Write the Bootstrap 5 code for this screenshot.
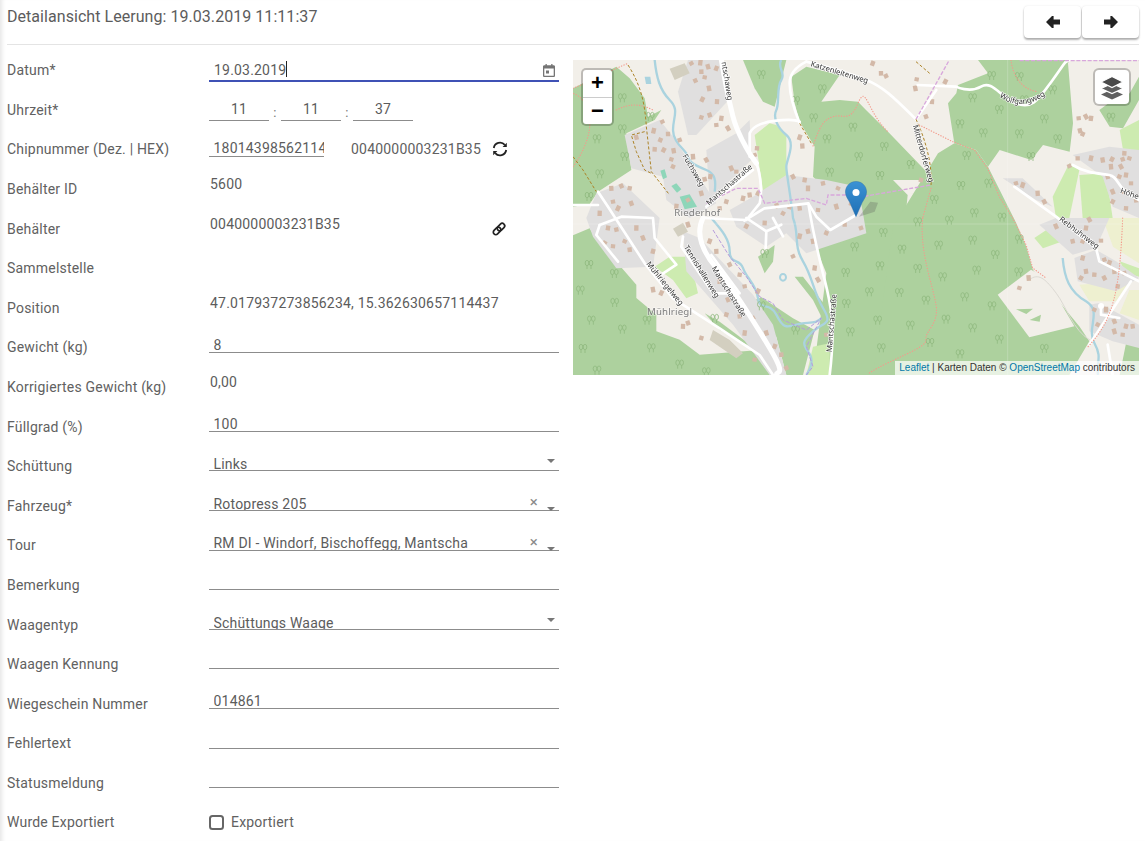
<!DOCTYPE html>
<html lang="de">
<head>
  <meta charset="UTF-8" />
  <meta name="viewport" content="width=device-width, initial-scale=1.0"/>
  <title>Detailansicht Leerung</title>
  <link href="https://cdn.jsdelivr.net/npm/bootstrap@5.3.0/dist/css/bootstrap.min.css" rel="stylesheet">
  <style>
    html, body { height: 100%; overflow: hidden; }
    body {
      font-family: Roboto, "Liberation Sans", sans-serif;
      font-size: 14px;
      letter-spacing: .2px;
      color: #616161;
      background: #fff;
      box-shadow: inset 5px 0 4px -3px rgba(0,0,0,.1);
    }
    .page-wrap { margin: 0 6px 0 7px; }

    .head-bar { height: 45px; border-bottom: 1px solid #e4e4e4; }
    .head-title { font-size: 16px; letter-spacing: .05px; line-height: 20px; padding-top: 7px; color: #5c5c5c; }
    .nav-btn {
      width: 57px; height: 32px; margin-top: 6px; padding: 0;
      background: #fff; border: 0; border-radius: 4px;
      box-shadow: 0 2px 2px rgba(0,0,0,.3), 0 0 2px rgba(0,0,0,.1);
      display: flex; align-items: center; justify-content: center;
    }
    .nav-btn + .nav-btn { margin-left: 1px; }

    .form-col { padding: 5.2px 14px 0 0; }
    .map-col { padding-top: 15px; }

    .field-row { display: flex; height: 39.6px; }
    .field-label { width: 202px; flex: none; line-height: 40px; white-space: nowrap; }
    .field-body { flex: 1 1 auto; min-width: 0; height: 25.3px; display: flex; flex-direction: column; justify-content: flex-end; position: relative; }
    .field-text { line-height: 20px; padding: 9px 0 0 1px; height: 29px; color: #5c5c5c; }

    .line-input {
      display: block; width: 100%; height: 18px;
      padding: 4px 4px 0 4.500px;
      border: 0; border-bottom: 1px solid #8c8c8c; border-radius: 0;
      background: transparent; box-shadow: none;
      font: 14px Roboto, sans-serif; letter-spacing: .2px; color: #5c5c5c; line-height: 14px;
      outline: 0;
    }
    .line-input:focus { border-color: #8c8c8c; box-shadow: none; }
    select.line-input { appearance: none; -webkit-appearance: none; }

    .date-body { height: 32px; }
    .date-input { height: 22px; padding: 0 4px 0 5px; line-height: 20px; border-bottom: 2px solid #3f51b5; }
    .date-input:focus { border-color: #3f51b5; }
    .caret-line { position: absolute; left: 77px; top: 11px; width: 1px; height: 16px; background: #222; }
    .date-icon { position: absolute; right: 4px; top: 14px; }

    .time-body { height: 31.300px; flex-direction: row; align-items: flex-end; justify-content: flex-start; }
    .time-input { width: 60px; height: 22px; padding: 0 0 1px; line-height: 20px; text-align: center; flex: none; }
    .time-sep { width: 12px; text-align: center; line-height: 16px; font-size: 13px; color: #757575; flex: none; }

    .chip-body { height: 27.800px; flex-direction: row; align-items: flex-end; justify-content: flex-start; }
    .chip-input { width: 115px; flex: none; padding: 0 0 1px 4.500px; height: 17px; }
    .chip-hex { margin-left: 27px; line-height: 20px; position: relative; top: 2px; white-space: nowrap; }
    .chip-icon { margin-left: 11px; position: relative; top: 0; }

    .link-icon { position: absolute; left: 282px; top: 12px; }

    .sel-caret::after {
      content: ""; position: absolute; right: 4px; bottom: 8px;
      border-left: 4.500px solid transparent; border-right: 4.500px solid transparent; border-top: 4px solid #777;
    }
    .caret-low::after { bottom: 0; }
    .clear-x { position: absolute; right: 21px; bottom: 1px; font-size: 15px; line-height: 15px; color: #8a8a8a; }

    .check-box { width: 15px; height: 15px; margin: 1px 0 0; border: 2px solid #666; border-radius: 2px; background: #fff; flex: none; }
    .check-wrap { display: flex; align-items: center; gap: 7px; height: 100%; }

    .map-box { position: relative; height: 315px; overflow: hidden; background: #f2efe9; }
    .map-svg { display: block; width: 566px; height: 315px; filter: blur(.5px); }
    .map-svg text { font-family: "Noto Sans", sans-serif; font-size: 23px; letter-spacing: 0; fill: #333; paint-order: stroke; stroke: rgba(255,255,255,.85); stroke-width: 4px; }
    .map-svg text.place { font-size: 29px; fill: #7b7b7b; stroke: rgba(255,255,255,.5); letter-spacing: .5px; }

    .zoom-box {
      position: absolute; left: 10px; top: 10px; width: 29px; height: 54px;
      background: #fff; border-radius: 3px; box-shadow: 0 0 0 2px rgba(0,0,0,.22);
    }
    .zoom-box a {
      display: block; height: 27px; text-align: center; text-decoration: none;
      font: bold 22px/26px "Liberation Sans", sans-serif; letter-spacing: 0; color: #000;
    }
    .zoom-box a + a { border-top: 1px solid #ccc; }
    .layer-box {
      position: absolute; right: 10px; top: 10px; width: 34px; height: 34px;
      background: #fff; border-radius: 4px; box-shadow: 0 0 0 2px rgba(0,0,0,.22);
      display: flex; align-items: center; justify-content: center;
    }
    .map-attrib {
      position: absolute; right: 0; bottom: 0; height: 14px; padding: 0 4px;
      background: rgba(255,255,255,.7); white-space: nowrap;
      font: 10px/14px "Liberation Sans", sans-serif; letter-spacing: 0; color: #333;
    }
    .map-attrib a { color: #0078a8; text-decoration: none; }
  </style>
</head>
<body>
  <div class="page-wrap">
    <div class="head-bar d-flex justify-content-between align-items-start">
      <div class="head-title">Detailansicht Leerung: 19.03.2019 11:11:37</div>
      <div class="d-flex">
        <button class="btn nav-btn" type="button" aria-label="Zurück">
          <svg width="14" height="12" viewBox="0 0 14 12"><path fill="#222" d="M0 6 6 0h1.6v3.5H14v5H7.6V12H6z"/></svg>
        </button>
        <button class="btn nav-btn" type="button" aria-label="Weiter">
          <svg width="14" height="12" viewBox="0 0 14 12"><path fill="#222" d="M14 6 8 0H6.4v3.5H0v5h6.4V12H8z"/></svg>
        </button>
      </div>
    </div>

    <div class="row g-0">
      <div class="col-6 form-col">
        <div class="field-row">
          <div class="field-label">Datum*</div>
          <div class="field-body date-body">
            <input class="form-control line-input date-input" value="19.03.2019">
            <span class="caret-line"></span>
            <svg class="date-icon" width="12" height="13" viewBox="0 0 12 13"><path fill="#757575" d="M2.5 0h1.3v1.3h4.4V0h1.3v1.3h1.2c.7 0 1.3.6 1.3 1.3v9.1c0 .7-.6 1.3-1.3 1.3H1.300c-.7 0-1.300-.6-1.300-1.300V2.600c0-.7.6-1.300 1.300-1.300h1.200zM1.300 4.600v7.100h9.400V4.600zM3 6.500h3v3H3z"/></svg>
          </div>
        </div>
        <div class="field-row">
          <div class="field-label">Uhrzeit*</div>
          <div class="field-body time-body">
            <input class="form-control line-input time-input" value="11">
            <span class="time-sep">:</span>
            <input class="form-control line-input time-input" value="11">
            <span class="time-sep">:</span>
            <input class="form-control line-input time-input" value="37">
          </div>
        </div>
        <div class="field-row">
          <div class="field-label">Chipnummer (Dez. | HEX)</div>
          <div class="field-body chip-body">
            <input class="form-control line-input chip-input" value="18014398562114357">
            <span class="chip-hex">0040000003231B35</span>
            <svg class="chip-icon" width="16" height="16" viewBox="0 0 16 16" fill="none" stroke="#222" stroke-width="1.8">
              <path d="M1.800 7A6.300 6.300 0 0 1 12.800 3.800"/><path d="M14.200 9A6.300 6.300 0 0 1 3.200 12.200"/>
              <path fill="#222" stroke="none" d="M14.800 1.800v4.200h-4.200zM1.200 14.200V10h4.200z"/>
            </svg>
          </div>
        </div>
        <div class="field-row">
          <div class="field-label">Behälter ID</div>
          <div class="field-body"><div class="field-text">5600</div></div>
        </div>
        <div class="field-row">
          <div class="field-label">Behälter</div>
          <div class="field-body">
            <div class="field-text">0040000003231B35</div>
            <svg class="link-icon" width="16" height="16" viewBox="0 0 16 16" fill="none" stroke="#222" stroke-width="1.700">
              <g transform="rotate(-45 8 8)"><rect x="1" y="5.500" width="8.500" height="5" rx="2.500"/><rect x="6.500" y="5.500" width="8.500" height="5" rx="2.500"/></g>
            </svg>
          </div>
        </div>
        <div class="field-row">
          <div class="field-label">Sammelstelle</div>
          <div class="field-body"></div>
        </div>
        <div class="field-row">
          <div class="field-label">Position</div>
          <div class="field-body"><div class="field-text">47.017937273856234, 15.362630657114437</div></div>
        </div>
        <div class="field-row">
          <div class="field-label">Gewicht (kg)</div>
          <div class="field-body"><input class="form-control line-input" value="8"></div>
        </div>
        <div class="field-row">
          <div class="field-label">Korrigiertes Gewicht (kg)</div>
          <div class="field-body"><div class="field-text">0,00</div></div>
        </div>
        <div class="field-row">
          <div class="field-label">Füllgrad (%)</div>
          <div class="field-body"><input class="form-control line-input" value="100"></div>
        </div>
        <div class="field-row">
          <div class="field-label">Schüttung</div>
          <div class="field-body sel-caret">
            <select class="form-select line-input"><option>Links</option></select>
          </div>
        </div>
        <div class="field-row">
          <div class="field-label">Fahrzeug*</div>
          <div class="field-body sel-caret caret-low">
            <input class="form-control line-input" value="Rotopress 205">
            <span class="clear-x">×</span>
          </div>
        </div>
        <div class="field-row">
          <div class="field-label">Tour</div>
          <div class="field-body sel-caret caret-low">
            <input class="form-control line-input" value="RM DI - Windorf, Bischoffegg, Mantscha">
            <span class="clear-x">×</span>
          </div>
        </div>
        <div class="field-row">
          <div class="field-label">Bemerkung</div>
          <div class="field-body"><input class="form-control line-input"></div>
        </div>
        <div class="field-row">
          <div class="field-label">Waagentyp</div>
          <div class="field-body sel-caret">
            <select class="form-select line-input"><option>Schüttungs Waage</option></select>
          </div>
        </div>
        <div class="field-row">
          <div class="field-label">Waagen Kennung</div>
          <div class="field-body"><input class="form-control line-input"></div>
        </div>
        <div class="field-row">
          <div class="field-label">Wiegeschein Nummer</div>
          <div class="field-body"><input class="form-control line-input" value="014861"></div>
        </div>
        <div class="field-row">
          <div class="field-label">Fehlertext</div>
          <div class="field-body"><input class="form-control line-input"></div>
        </div>
        <div class="field-row">
          <div class="field-label">Statusmeldung</div>
          <div class="field-body"><input class="form-control line-input"></div>
        </div>
        <div class="field-row">
          <div class="field-label">Wurde Exportiert</div>
          <div class="check-wrap">
            <input class="form-check-input check-box" type="checkbox" id="exported">
            <label for="exported">Exportiert</label>
          </div>
        </div>
      </div>

      <div class="col-6 map-col">
        <div class="map-box">
          <svg class="map-svg" viewBox="0 0 1698 945" id="mapSvg">
            <defs>
              <g id="treeMark" fill="none" stroke="#8fb97f" stroke-width="2.400">
                <ellipse cx="-6" cy="-3" rx="5.500" ry="8"/><ellipse cx="6" cy="-3" rx="5.500" ry="8"/>
                <path d="M-6 5v10M6 5v10"/>
              </g>
              <linearGradient id="pinFill" x1="0" y1="0" x2="0" y2="1"><stop offset="0" stop-color="#3b92d4"/><stop offset="1" stop-color="#1f6fb5"/></linearGradient>
            </defs>
            <rect width="1698" height="945" fill="#f2efe9"/>

            <!-- forest -->
            <g fill="#add19e">
              <path d="M0 85 60 55 130 20 170 55 215 115 225 170 265 150 245 180 160 220 175 330 75 395 50 432 0 440z"/>
              <path d="M510 0H640L605 140 570 125 545 85z"/>
              <path d="M655 50 700 20 800 45 745 125 800 120 855 125 879 150 945 215 1065 340 1064 360 960 360 1004 405 1119 365 1095 280 1144 250 1210 270 1245 320 1280 270 1375 300 1410 255 1490 275 1500 190 1485 10 1490 0H1215L1245 40 1155 75 1150 100 1125 130 1144 250 1095 280 1119 365 1074 380 1004 405 950 945H720L760 640 730 565 860 500 800 430 720 350 725 260 680 185 665 130z"/>
              <path d="M1095 280 1144 250 1210 270 1245 320 1330 490 1360 560 1380 630 1520 800 1549 844 1489 945H900L960 500z"/>
              <path d="M0 526 50 505 65 530 190 674 190 714 250 764 250 814 320 839 380 884 560 870 600 945H0z"/>
              <path d="M395 760 440 785 560 875 440 810z"/>
              <path d="M525 730 565 712 660 775 725 810 690 945H640L610 830z"/>
              <path d="M555 590 605 555 600 605 575 640z"/>
              <path d="M665 650 690 650 760 740 760 800 720 720z"/>
              <path d="M1579 150 1610 200 1650 205 1698 120V50L1670 100 1620 120z"/>
              <path d="M1660 845 1698 830V945H1640z"/>
            </g>
            <!-- cream parcel in the forest -->
            <path fill="#f2efe9" d="M1274 704 1374 629 1419 654 1504 799 1369 832z"/>
            <path fill="#add19e" d="M1329 748 1380 746 1360 762zM1370 780 1404 764 1400 785z"/>

            <!-- meadow -->
            <g fill="#cdebb0">
              <path d="M400 45 445 35 460 105 420 120z"/>
              <path d="M545 225 590 190 610 195 640 230 640 410 575 425z"/>
              <path d="M1640 210 1698 180V280L1650 270z"/>
              <path d="M1439 410 1489 310 1519 330 1489 474H1449z"/>
              <path d="M1519 345 1599 340 1619 474H1529z"/>
              <path d="M245 620 290 590 350 590 375 700 340 715 300 660z"/>
              <path d="M720 860 770 850 770 945H700z"/>
              <path d="M1384 534 1429 504 1469 544 1410 565z"/>
              <path d="M1640 604 1698 625V650L1660 640z"/>
            </g>
            <path fill="#eef0d0" d="M1449 474H1500L1480 500 1450 520 1425 500zM1589 474H1698V610L1620 560zM1519 674 1669 664 1629 724 1549 724zM1669 690H1698V780L1640 760z"/>

            <!-- residential -->
            <g fill="#e0dfdf">
              <path d="M315 95 345 0H445L462 125 370 225H345z"/>
              <path d="M400 270 490 220 530 180 535 300 410 420z"/>
              <path d="M155 225 260 180 300 230 430 430 350 474 280 420 270 350 175 325z"/>
              <path d="M70 400 150 370 260 474 240 620 130 625 60 530 40 474z"/>
              <path d="M640 345 760 360 855 380 870 460 880 520 820 540 700 580 640 520 580 560 490 500 470 450 540 410z"/>
              <path d="M330 514 380 534 540 704 600 794 640 945H590L480 794 340 634z"/>
              <path d="M1289 355 1349 355 1439 440 1389 420z"/>
              <path d="M1499 285 1609 260 1698 270V474L1619 440 1589 350z"/>
              <path d="M1399 494 1449 474 1609 474 1569 564 1499 584z"/>
              <path d="M1504 594 1569 569 1629 604 1698 654 1629 694 1514 664z"/>
              <path d="M1549 734 1579 729 1698 794V864L1619 844 1549 814z"/>
            </g>
            <path fill="#d3cfc0" d="M290 26 335 10 350 40 305 60zM300 506 330 488 345 515 315 530zM420 810 470 840 510 880 490 895 410 840z"/>

            <!-- water -->
            <g fill="none" stroke="#aad3df" stroke-width="7">
              <path d="M245 0C250 50 260 90 290 120S300 170 300 210 340 270 345 290 375 320 400 330 430 360 425 395"/>
              <path d="M415 474C440 504 470 534 470 574S500 594 510 624 550 674 555 714 590 724 610 764 640 804 670 794 730 794 745 774"/>
              <path d="M625 0C610 20 640 40 625 60S620 130 610 150 610 200 640 225 640 300 640 320 655 420 660 474C680 524 660 554 690 604S720 694 750 744 755 784 720 814 690 854 705 874 720 914 700 945"/>
              <path d="M1469 594C1474 654 1489 694 1539 724S1539 804 1564 849 1569 904 1575 945"/>
            </g>
            <path fill="#aad3df" d="M215 50h17l3 22h-16z"/>
            <ellipse cx="630" cy="652" rx="9" ry="10" fill="none" stroke="#aad3df" stroke-width="6"/>
            <g fill="#8ed6b9">
              <path d="M262 332 275 328 282 352 270 358z"/><path d="M295 378 310 370 325 388 312 398z"/><path d="M320 410 350 403 372 440 335 448z"/>
            </g>

            <!-- tile seams -->
            <path d="M1304 0V945M0 492H1698" stroke="#fff" stroke-opacity=".3" stroke-width="2"/>

            <!-- houses and trees come from the lists below -->
            <g id="houseLayer" fill="#d3b9a8"></g>
            <g id="treeLayer"></g>

            <!-- roads -->
            <g fill="none" stroke="#fff" stroke-linecap="round" stroke-linejoin="round">
              <g stroke-width="15">
                <path d="M445 0C455 60 470 130 480 170S520 270 550 310"/>
                <path d="M390 474C370 514 380 564 430 624S530 764 590 864 600 924 612 950"/>
              </g>
              <g stroke-width="8">
                <path d="M400 440 540 330"/>
                <path d="M550 310C565 350 567 400 560 430L520 480 390 474"/>
                <path d="M680 185C660 175 640 180 610 182S540 195 530 220V290"/>
                <path d="M700 5C670 20 650 40 650 70S660 140 680 190"/>
                <path d="M700 5C760 20 830 40 880 60S960 110 1029 178"/>
                <path d="M1029 178 1090 90"/>
                <path d="M1034 75 1149 80S1190 100 1224 80 1280 110 1329 130 1395 120 1439 60 1470 10 1489 0"/>
                <path d="M0 435H75"/>
                <path d="M75 395 105 440 215 610 300 715 440 805 560 885 600 945"/>
                <path d="M80 495 70 525 135 605"/>
                <path d="M80 495 145 470 240 474 245 534 310 614 265 644"/>
                <path d="M330 530 325 560 420 700 500 700 415 585"/>
                <path d="M514 482 574 445 706 430 730 470 772 510 849 465"/>
                <path d="M706 430C720 520 730 560 750 640S790 780 770 945"/>
                <path d="M520 474 580 514 625 494M580 514 578 564M600 474 630 529"/>
                <path d="M1499 315C1539 340 1579 340 1609 345S1629 390 1698 420"/>
                <path d="M1324 380 1449 470 1569 564 1579 604 1698 664"/>
                <path d="M1674 664 1549 854M1584 736 1584 764 1639 774M1604 854 1619 945"/>
              </g>
              <path stroke="#dcd9d3" stroke-width="3" d="M1375 655C1400 640 1420 660 1450 700S1500 810 1550 840"/>
            </g>
            <circle cx="1584" cy="738" r="9" fill="#fff"/>

            <!-- paths and tracks -->
            <g fill="none" stroke="#d8a7dc" stroke-width="4" stroke-dasharray="12 5">
              <path d="M400 430 490 385 555 385 575 430 700 415 760 435 765 405 855 405 879 408 1074 375"/>
              <path d="M1029 178 1129 0"/>
              <path d="M1340 2H1698"/>
              <path d="M420 510 470 590 520 650 560 710 600 730 630 780 700 810 745 774 700 860 720 920 700 945" stroke="#b59bdc" stroke-width="3"/>
            </g>
            <g fill="none" stroke="#f39a8c" stroke-width="3.500" stroke-linecap="round" stroke-dasharray="1 7">
              <path d="M0 85 60 60 130 25 165 10"/>
              <path d="M0 320C30 280 55 220 50 180S30 110 0 100"/>
              <path d="M130 150C170 130 200 130 240 150"/>
              <path d="M720 258C740 200 750 180 780 170S830 190 855 130 879 150 944 215"/>
              <path d="M1039 195 1139 245 1204 270 1244 325 1279 410 1319 474 1359 554 1379 624 1419 654"/>
              <path d="M1314 0C1319 50 1349 90 1394 95"/>
              <path d="M1049 474C1039 574 1079 674 1089 734S1054 814 1059 839 949 899 889 939"/>
              <path d="M1074 385 1049 474"/>
              <path d="M1649 474C1640 700 1620 780 1545 860"/>
            </g>
            <g fill="none" stroke="#ac8327" stroke-width="3" stroke-dasharray="9 6">
              <path d="M165 15C200 70 215 120 220 200L235 335 290 405"/>
              <path d="M215 215 175 225 190 275 215 330 235 340"/>
              <path d="M0 290 30 330 70 395"/>
              <path d="M680 190 715 250"/>
              <path d="M1029 178C1049 220 1079 300 1074 378"/>
              <path d="M1029 5 1070 40"/>
            </g>

            <!-- road names -->
            <text transform="translate(464 122) rotate(81)" text-anchor="end">ntschaweg</text>
            <text transform="translate(328 288) rotate(60)">Fuchsweg</text>
            <text transform="translate(408 437) rotate(-41)">Mantschastraße</text>
            <text transform="translate(712 18) rotate(17)">Katzenleitenweg</text>
            <path id="wolfPath" fill="none" d="M1279 110Q1340 155 1414 108"/>
            <text><textPath href="#wolfPath">Wolfgangweg</textPath></text>
            <text transform="translate(1019 197) rotate(74)">Mitterdorferweg</text>
            <text transform="translate(1640 398) rotate(20)">Höhe</text>
            <text transform="translate(1457 481) rotate(37)">Rebhuhnweg</text>
            <text transform="translate(332 562) rotate(58)">Tennishallenweg</text>
            <text transform="translate(415 625) rotate(58)">Mantschastraße</text>
            <text transform="translate(219 612) rotate(51)">Mühlriegelweg</text>
            <text transform="translate(776 877) rotate(-85)">Mantschastraße</text>
            <text class="place" x="304" y="468">Riederhof</text>
            <text class="place" x="222" y="765">Mühlriegl</text>

            <!-- marker -->
            <path fill="#555" fill-opacity=".28" d="M858 470 892 425 915 428 905 455z"/>
            <g transform="translate(816 363) scale(2.640)">
              <path fill="url(#pinFill)" stroke="#2a6fa8" stroke-width=".5" d="M12.500.5C5.600.5.500 6 .500 12.500c0 4.500 2.500 7.500 5 12L12.500 40.500l7-16c2.500-4.500 5-7.500 5-12C24.500 6 19.400.5 12.500.5z"/>
              <circle cx="12.500" cy="13" r="4" fill="#fff"/>
            </g>
          </svg>

          <div class="zoom-box">
            <a href="#" aria-label="Vergrößern">+</a>
            <a href="#" aria-label="Verkleinern">−</a>
          </div>
          <div class="layer-box">
            <svg width="26" height="26" viewBox="0 0 26 26">
              <path fill="#5f5f5f" d="M13 15.500 2 20.500 13 25.500 24 20.500z"/>
              <path fill="#5f5f5f" stroke="#fff" stroke-width="1.200" d="M13 9.500 2 14.500 13 19.500 24 14.500z"/>
              <path fill="#4a4a4a" stroke="#fff" stroke-width="1.200" d="M13 2.500 2 8 13 13.500 24 8z"/>
            </svg>
          </div>
          <div class="map-attrib"><a href="#">Leaflet</a> | Karten Daten © <a href="#">OpenStreetMap</a> contributors</div>
        </div>
      </div>
    </div>
  </div>

  <script src="https://cdn.jsdelivr.net/npm/bootstrap@5.3.0/dist/js/bootstrap.bundle.min.js"></script>
  <script>
    // map decoration, positions read off the screenshot per quadrant (3x pixels)
    const houses = {
      '0,0': '355,10 382,8 405,20 430,25 385,35 367,62 395,52 408,85 388,118 432,125 410,165 385,172 430,195 465,205 445,175 190,232 262,240 285,222 268,185 242,212 302,272 272,270 245,268 320,240 295,298 360,290 400,300 412,350 395,358 300,320 490,335 475,325 510,415 530,405 555,400 552,265 545,285 680,232 688,258 660,350 695,360 750,370 795,385 705,385 612,437 650,440 680,445 630,460 735,450 790,440 835,430 115,385 145,378 170,385 120,425 135,445 80,460 175,430 460,425 440,445 345,420 310,440 385,400',
      '849,0': '50,10 75,40 90,48 182,58 178,85 268,65 228,125 210,170 195,360 668,175 690,170 705,175 672,212 680,222 665,295 640,318 705,295 740,300 768,298 805,280 800,298 820,295 765,320 795,320 810,345 755,350 790,350 825,370 770,395 805,395 840,420 770,425 810,445 480,370 500,375 545,400 565,425',
      '0,474': '105,30 130,35 155,70 190,30 210,60 240,100 170,95 95,75 120,85 345,20 410,70 430,100 470,140 500,170 515,205 555,220 440,190 465,245 460,290 500,295 540,300 515,345 580,345 605,385 625,410 640,450 545,425 240,215 265,225 330,325 345,315 385,360 760,350 735,185 725,150 705,40 760,45 815,20 660,115 680,55 720,70 520,25 575,15',
      '849,474': '15,30 490,210 518,180 700,5 690,30 650,70 680,70 735,68 600,25 680,120 690,160 675,180 715,170 745,125 760,135 775,160 745,180 785,205 805,165 715,275 750,275 775,310 810,325 830,325 725,320 800,350 775,340'
    };
    const trees = {
      '0,0': '72,235 148,112 148,205 155,288 80,340 48,408 232,168 565,42 668,120 748,85 722,172 762,235 770,335 840,200',
      '849,0': '407,45 490,48 350,112 430,147 590,88 505,118 312,190 382,217 490,220 565,175 605,235 525,288 85,258 165,312 72,345 8,288 332,285 398,368 315,375 235,417 355,457 765,170 438,470',
      '0,474': '48,138 124,165 22,215 125,252 55,305 148,332 222,305 30,390 235,388 320,437 72,455 400,460 575,105 565,262 818,162 820,255 668,335 832,340 845,85 425,300',
      '849,474': '82,42 138,92 248,80 350,65 418,108 72,142 260,175 362,155 488,160 40,220 130,222 210,245 326,235 408,262 65,305 163,320 270,302 350,328 430,362 76,388 222,372 312,406 565,390 490,62 185,150 185,10 280,5'
    };

    function eachPoint(table, fn) {
      Object.entries(table).forEach(([offset, list]) => {
        const [ox, oy] = offset.split(',').map(Number);
        list.split(' ').forEach(pair => {
          const [x, y] = pair.split(',').map(Number);
          fn(x + ox, y + oy);
        });
      });
    }

    const ns = 'http://www.w3.org/2000/svg';
    const houseLayer = document.getElementById('houseLayer');
    const treeLayer = document.getElementById('treeLayer');
    let i = 0;
    eachPoint(houses, (x, y) => {
      const r = document.createElementNS(ns, 'rect');
      const w = 13 + (i * 7) % 7;
      const h = 12 + (i * 5) % 6;
      r.setAttribute('x', x - w / 2);
      r.setAttribute('y', y - h / 2);
      r.setAttribute('width', w);
      r.setAttribute('height', h);
      r.setAttribute('transform', `rotate(${(i * 37) % 60 - 30} ${x} ${y})`);
      houseLayer.appendChild(r);
      i++;
    });
    eachPoint(trees, (x, y) => {
      const u = document.createElementNS(ns, 'use');
      u.setAttribute('href', '#treeMark');
      u.setAttribute('x', x);
      u.setAttribute('y', y);
      treeLayer.appendChild(u);
    });
  </script>
</body>
</html>
